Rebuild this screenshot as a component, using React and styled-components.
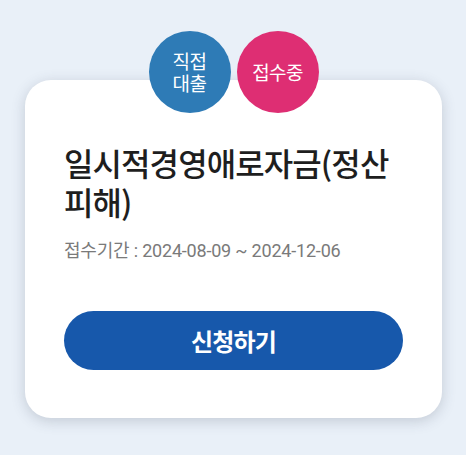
import React from 'react';
import styled, { createGlobalStyle } from 'styled-components';

const GlobalStyle = createGlobalStyle`
    body {
        margin: 0;
        background: #e9f0f8;
        font-family: Roboto, "Noto Sans CJK KR", sans-serif;
    }
`;

const App = () => {
    return (
        <Page>
            <GlobalStyle />
            <Card>
                <Badges>
                    <Badge color="#2e7bb6">
                        <span>직접</span>
                        <span>대출</span>
                    </Badge>
                    <Badge color="#de2e73">
                        <span>접수중</span>
                    </Badge>
                </Badges>
                <Title>일시적경영애로자금(정산 피해)</Title>
                <Period>접수기간 : 2024-08-09 ~ 2024-12-06</Period>
                <ApplyButton>신청하기</ApplyButton>
            </Card>
        </Page>
    );
};

export default App;

const Page = styled.div`
    width: 466px;
    height: 455px;
    padding: 80px 24px 0 25px;
    box-sizing: border-box;
`;

const Card = styled.div`
    display: flex;
    flex-direction: column;
    width: 417px;
    box-sizing: border-box;
    background: #fff;
    border-radius: 26px;
    padding: 0 39px 48px;
    box-shadow: 0 3px 14px rgba(60, 70, 90, 0.22);
`;

const Badges = styled.div`
    display: flex;
    justify-content: center;
    gap: 6px;
    margin-top: -49px;
`;

const Badge = styled.div`
    width: 82px;
    height: 82px;
    border-radius: 50%;
    background: ${(p) => p.color};
    color: #fff;
    display: flex;
    flex-direction: column;
    align-items: center;
    justify-content: center;
    font-size: 19px;
    line-height: 22px;
    font-weight: 400;
    letter-spacing: -0.6px;
    font-family: "Noto Sans CJK KR", sans-serif;
`;

const Title = styled.h2`
    margin: 30px 0 0;
    font-size: 32px;
    line-height: 39px;
    font-weight: 500;
    letter-spacing: -0.9px;
    color: #1e1e1e;
    font-family: "Noto Sans CJK KR", sans-serif;
`;

const Period = styled.p`
    margin: 17px 0 0;
    font-size: 18px;
    line-height: 25px;
    letter-spacing: -0.2px;
    color: #7a7a7a;
`;

const ApplyButton = styled.button`
    display: block;
    width: 100%;
    height: 59px;
    margin-top: 48px;
    border: 0;
    border-radius: 30px;
    background: #1758ab;
    color: #fff;
    font-size: 24px;
    font-weight: 700;
    letter-spacing: -0.8px;
    font-family: "Noto Sans CJK KR", sans-serif;
`;
